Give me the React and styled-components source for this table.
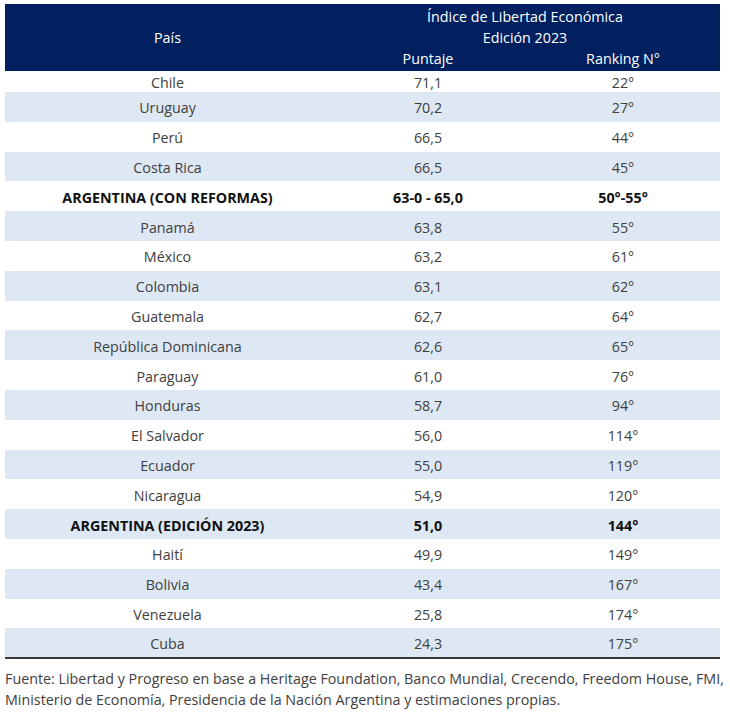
import styled, { createGlobalStyle } from "styled-components";

const GlobalStyle = createGlobalStyle`
  body {
    margin: 0;
    background: #fff;
    font-family: "Open Sans", "Liberation Sans", sans-serif;
  }
`;

const rows = [
  ["Chile", "71,1", "22°"],
  ["Uruguay", "70,2", "27°"],
  ["Perú", "66,5", "44°"],
  ["Costa Rica", "66,5", "45°"],
  ["ARGENTINA (CON REFORMAS)", "63-0 - 65,0", "50°-55°", true],
  ["Panamá", "63,8", "55°"],
  ["México", "63,2", "61°"],
  ["Colombia", "63,1", "62°"],
  ["Guatemala", "62,7", "64°"],
  ["República Dominicana", "62,6", "65°"],
  ["Paraguay", "61,0", "76°"],
  ["Honduras", "58,7", "94°"],
  ["El Salvador", "56,0", "114°"],
  ["Ecuador", "55,0", "119°"],
  ["Nicaragua", "54,9", "120°"],
  ["ARGENTINA (EDICIÓN 2023)", "51,0", "144°", true],
  ["Haití", "49,9", "149°"],
  ["Bolivia", "43,4", "167°"],
  ["Venezuela", "25,8", "174°"],
  ["Cuba", "24,3", "175°"],
];

const App = () => {
  return (
    <Page>
      <GlobalStyle />
      <Table>
        <colgroup>
          <col style={{ width: 325 }} />
          <col style={{ width: 196 }} />
          <col style={{ width: 194 }} />
        </colgroup>
        <thead>
          <tr>
            <HeadCell rowSpan={2}>País</HeadCell>
            <HeadCell colSpan={2} $top>
              Índice de Libertad Económica
              <br />
              Edición 2023
            </HeadCell>
          </tr>
          <tr>
            <HeadCell $bottom>Puntaje</HeadCell>
            <HeadCell $bottom>Ranking N°</HeadCell>
          </tr>
        </thead>
        <tbody>
          {rows.map(([pais, puntaje, ranking, bold], i) => (
            <Row key={pais} $shaded={i % 2 === 1} $first={i === 0} $bold={bold}>
              <Cell>{pais}</Cell>
              <Cell>{puntaje}</Cell>
              <Cell>{ranking}</Cell>
            </Row>
          ))}
        </tbody>
      </Table>
      <Source>
        Fuente: Libertad y Progreso en base a Heritage Foundation, Banco Mundial, Crecendo, Freedom
        House, FMI, Ministerio de Economía, Presidencia de la Nación Argentina y estimaciones propias.
      </Source>
    </Page>
  );
};

export default App;

const Page = styled.div`
  width: 730px;
  padding-top: 4px;
`;

const Table = styled.table`
  margin-left: 5px;
  width: 715px;
  border-collapse: collapse;
  table-layout: fixed;
  border-bottom: 2px solid #3a3a3a;
`;

const HeadCell = styled.th`
  background: #002060;
  color: #fff;
  font-weight: 400;
  font-size: 14.3px;
  text-align: center;
  padding: 0;
  line-height: 21px;
  padding-top: ${(p) => (p.$top ? "2px" : "0")};
  height: ${(p) => (p.$bottom ? "23px" : "auto")};
  vertical-align: ${(p) => (p.$bottom ? "top" : "middle")};
`;

const Row = styled.tr`
  background: ${(p) => (p.$shaded ? "#dde8f4" : "#fff")};
  height: ${(p) => (p.$first ? "21px" : "29.8px")};
  color: ${(p) => (p.$bold ? "#111" : "#404040")};
  font-weight: ${(p) => (p.$bold ? 700 : 400)};
`;

const Cell = styled.td`
  padding: 3px 0 0;
  font-size: 14.3px;
  text-align: center;
  vertical-align: middle;
  line-height: 18px;
`;

const Source = styled.p`
  margin: 9px 0 0 5px;
  font-size: 14.3px;
  line-height: 21px;
  color: #404040;
`;
